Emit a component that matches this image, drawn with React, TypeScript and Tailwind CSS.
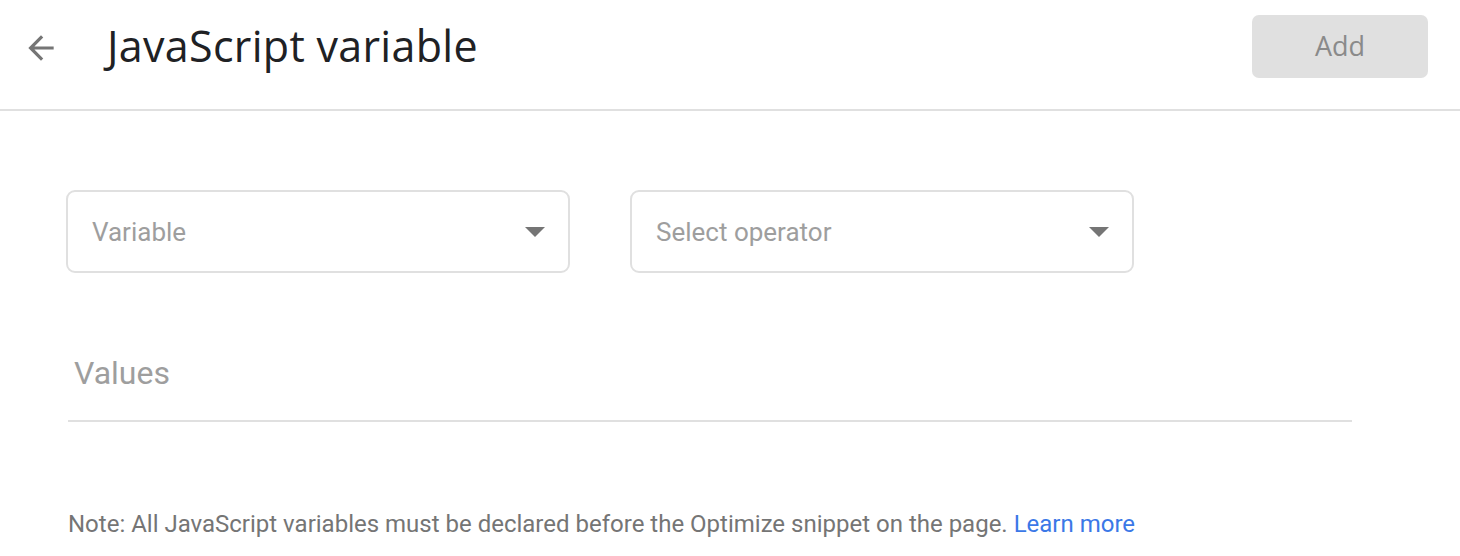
import React from "react";

function Select({ label }: { label: string }) {
  return (
    <div className="w-[504px] h-[83px] border-2 border-[#e0e0e0] rounded-[9px] flex items-center justify-between pl-[24px] pr-[22px]">
      <span className="text-[26px] text-[#9e9e9e] mt-[2px]">{label}</span>
      <svg width="22" height="12" viewBox="0 0 22 12">
        <path d="M1 1 L21 1 L11 11 Z" fill="#757575" />
      </svg>
    </div>
  );
}

export default function App() {
  return (
    <div className="w-[1460px] h-[556px] bg-white overflow-hidden" style={{ fontFamily: "Roboto, 'Liberation Sans', sans-serif" }}>
      <div className="h-[111px] border-b-2 border-[#e0e0e0] flex items-center pl-[22px] pr-[32px]">
        <svg width="38" height="38" viewBox="0 0 24 24" className="mt-[-14px]">
          <path d="M20 11H7.83l5.59-5.59L12 4l-8 8 8 8 1.41-1.41L7.83 13H20v-2z" fill="#757575" />
        </svg>
        <h1 className="ml-[47px] mt-[-16px] text-[43px] text-[#202124] tracking-[0.3px]" style={{ fontFamily: "'Open Sans', Roboto, sans-serif" }}>
          JavaScript variable
        </h1>
        <div className="ml-auto mt-[-16px] w-[176px] h-[63px] bg-[#e0e0e0] rounded-[7px] flex items-center justify-center text-[27px] text-[#8a8a8a]" style={{ fontFamily: "'Open Sans', Roboto, sans-serif" }}>
          Add
        </div>
      </div>
      <div className="pl-[66px] pt-[79px] flex gap-[60px]">
        <Select label="Variable" />
        <Select label="Select operator" />
      </div>
      <div className="ml-[68px] w-[1284px] mt-[78px] border-b-2 border-[#e0e0e0] pb-[25px] pl-[6px]">
        <span className="text-[32px] text-[#9e9e9e] leading-[44px]">Values</span>
      </div>
      <div className="ml-[68px] mt-[86px] text-[24px] text-[#757575] leading-[32px]">
        Note: All JavaScript variables must be declared before the Optimize snippet on the page.{" "}
        <span className="text-[#3b78e7]">Learn more</span>
      </div>
    </div>
  );
}
